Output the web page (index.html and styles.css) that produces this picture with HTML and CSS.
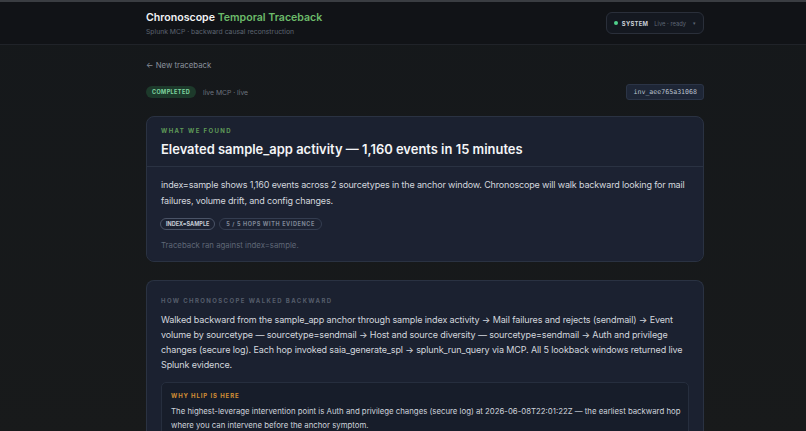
FILE: index.html
```html
<!DOCTYPE html>
<html lang="en">
<head>
  <meta charset="UTF-8" />
  <meta name="viewport" content="width=device-width, initial-scale=1.0" />
  <title>Chronoscope Temporal Traceback</title>
  <link rel="stylesheet" href="styles.css">
</head>
<body>

  <header class="topbar">
    <div class="wrap topbar-inner">
      <div class="brand">
        <div class="brand-title">Chronoscope <span class="accent">Temporal Traceback</span></div>
        <div class="brand-sub">Splunk MCP · backward causal reconstruction</div>
      </div>
      <div class="system-pill">
        <span class="dot"></span>
        <span class="sys-label">SYSTEM</span>
        <span class="sys-state">Live · ready</span>
        <span class="caret">▾</span>
      </div>
    </div>
  </header>

  <main class="wrap">
    <a class="back-link" href="#">← New traceback</a>

    <div class="status-row">
      <div class="status-left">
        <span class="badge-done">COMPLETED</span>
        <span class="mode">live MCP · live</span>
      </div>
      <span class="inv-id">inv_aee765a31068</span>
    </div>

    <section class="card">
      <div class="card-head">
        <div class="eyebrow green">WHAT WE FOUND</div>
        <h1 class="headline">Elevated sample_app activity — 1,160 events in 15 minutes</h1>
      </div>
      <div class="card-body">
        <p class="summary">index=sample shows 1,160 events across 2 sourcetypes in the anchor window. Chronoscope will walk backward looking for mail failures, volume drift, and config changes.</p>
        <div class="tags">
          <span class="tag strong">INDEX=SAMPLE</span>
          <span class="tag">5 / 5 HOPS WITH EVIDENCE</span>
        </div>
        <p class="note">Traceback ran against index=sample.</p>
      </div>
    </section>

    <section class="card walk">
      <div class="eyebrow muted">HOW CHRONOSCOPE WALKED BACKWARD</div>
      <p class="walk-text">Walked backward from the sample_app anchor through sample index activity → Mail failures and rejects (sendmail) → Event volume by sourcetype — sourcetype=sendmail → Host and source diversity — sourcetype=sendmail → Auth and privilege changes&nbsp;(secure&nbsp;log). Each hop invoked saia_generate_spl → splunk_run_query via MCP. All 5 lookback windows returned live Splunk evidence.</p>

      <div class="hlip">
        <div class="eyebrow orange">WHY HLIP IS HERE</div>
        <p class="hlip-text">The highest-leverage intervention point is Auth and privilege changes (secure log) at 2026-06-08T22:01:22Z — the earliest backward hop where you can intervene before the anchor symptom.</p>
      </div>
    </section>
  </main>

</body>
</html>
```

FILE: styles.css
```css
* {
  box-sizing: border-box;
}

body {
  margin: 0;
  font-family: Inter, "Noto Sans", sans-serif;
  color: #e6e8ec;
  background: linear-gradient(180deg, #15181b 0%, #181a1b 100%);
  min-height: 100vh;
  border-top: 2px solid #3a3d42;
}

.wrap {
  width: 558px;
  margin-left: 146px;
}

.topbar {
  background: #111317;
  border-bottom: 1px solid #202329;
  height: 43px;
}

.topbar-inner {
  height: 100%;
  display: flex;
  justify-content: space-between;
  align-items: center;
}

.brand-title {
  font-size: 10.6px;
  font-weight: 600;
  color: #f2f3f5;
}

.brand-title .accent {
  color: #6cbb6a;
}

.brand-sub {
  margin-top: 3px;
  font-size: 6.8px;
  color: #5c6370;
}

.system-pill {
  display: flex;
  align-items: center;
  gap: 4px;
  height: 22px;
  padding: 0 7px;
  border: 1px solid #2a2f3a;
  border-radius: 6px;
  background: #141820;
  font-size: 5.8px;
}

.dot {
  width: 4px;
  height: 4px;
  border-radius: 50%;
  background: #4fd18b;
}

.sys-label {
  font-weight: 700;
  letter-spacing: 0.3px;
  color: #c9ced6;
}

.sys-state {
  margin-left: 2px;
  color: #5d6574;
}

.caret {
  margin-left: 3px;
  color: #5d6574;
  font-size: 5px;
}

.back-link {
  display: inline-block;
  margin-top: 15px;
  font-size: 7.8px;
  color: #8a919c;
  text-decoration: none;
}

.status-row {
  margin-top: 12px;
  display: flex;
  justify-content: space-between;
  align-items: center;
}

.status-left {
  display: flex;
  align-items: center;
  gap: 7px;
}

.badge-done {
  background: #1d3a2b;
  color: #7fd6a0;
  font-size: 5.5px;
  font-weight: 700;
  letter-spacing: 0.4px;
  padding: 3px 6px;
  border-radius: 7px;
}

.mode {
  font-size: 6.8px;
  color: #6c737e;
}

.inv-id {
  font-family: "DejaVu Sans Mono", "Liberation Mono", monospace;
  font-size: 6.6px;
  color: #b9c0cc;
  background: #1e2636;
  border: 1px solid #2b3446;
  border-radius: 3px;
  padding: 3px 6px;
}

.card {
  margin-top: 16px;
  background: #1b2130;
  border: 1px solid #2a3242;
  border-radius: 8px;
}

.card + .card {
  margin-top: 18px;
}

.card-head {
  padding: 10px 14px 9px;
  border-bottom: 1px solid #2a3242;
}

.eyebrow {
  font-size: 6px;
  font-weight: 700;
  letter-spacing: 1.4px;
}

.eyebrow.green {
  color: #5f9a58;
}

.eyebrow.muted {
  color: #555d6b;
}

.eyebrow.orange {
  color: #d28e35;
  letter-spacing: 0.9px;
}

.headline {
  margin: 7px 0 0;
  font-size: 12.95px;
  font-weight: 600;
  color: #f4f5f7;
}

.card-body {
  padding: 10px 14px 11px;
  background: #1c2232;
  border-radius: 0 0 8px 8px;
}

.summary {
  margin: 0;
  font-size: 9px;
  line-height: 16px;
  letter-spacing: -0.16px;
  color: #d3d7de;
}

.tags {
  margin-top: 9px;
  margin-left: -1px;
  display: flex;
  gap: 4px;
}

.tag {
  font-size: 5.5px;
  font-weight: 700;
  letter-spacing: 0.6px;
  color: #7f8796;
  border: 1px solid #343d50;
  border-radius: 7px;
  padding: 2px 6px;
}

.tag.strong {
  letter-spacing: 0;
  padding: 2px 5px;
  color: #c6ccd6;
  border-color: #4a5366;
}

.note {
  margin: 10px 0 0;
  font-size: 7.8px;
  color: #5f6776;
}

.walk {
  padding: 16px 14px 0;
  border-bottom: none;
  border-radius: 8px 8px 0 0;
}

.walk-text {
  margin: 8px 0 0;
  font-size: 9px;
  line-height: 15px;
  letter-spacing: -0.12px;
  color: #d3d7de;
}

.hlip {
  margin-top: 10px;
  padding: 9px 2px 9px 9px;
  background: #171d2a;
  border: 1px solid #262e3e;
  border-radius: 5px;
}

.hlip-text {
  margin: 5px 0 0;
  font-size: 7.8px;
  line-height: 14px;
  color: #cdd2da;
}
```
